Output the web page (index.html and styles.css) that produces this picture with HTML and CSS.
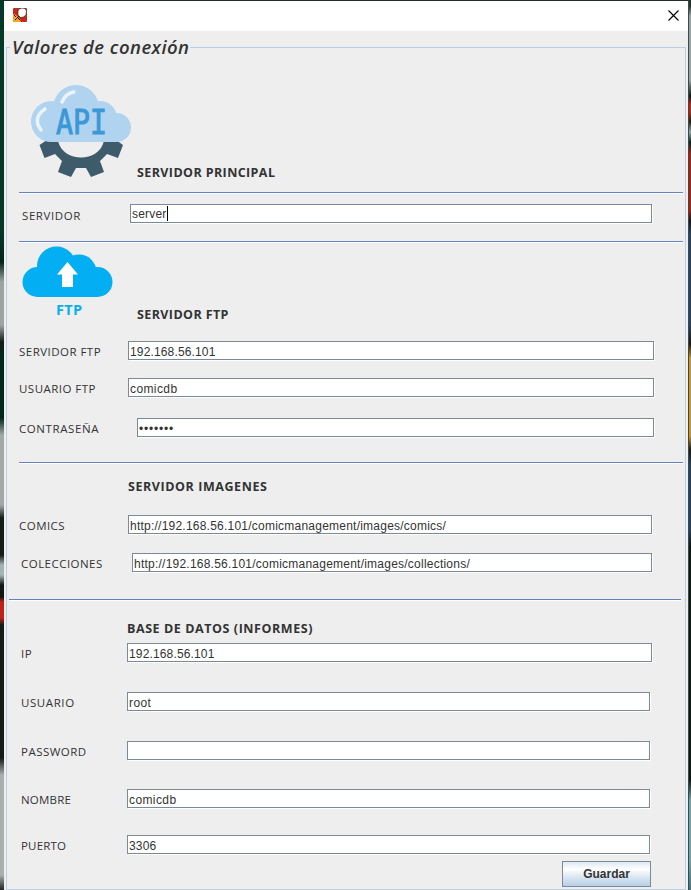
FILE: index.html
```
<!DOCTYPE html>
<html lang="es">
<head>
<meta charset="utf-8">
<title>Valores de conexión</title>
<link rel="stylesheet" href="styles.css">
</head>
<body>
<div class="desktop">
<main class="window">
  <header class="titlebar">
    <svg class="app-icon" width="14" height="14" viewBox="0 0 14 14"><rect width="14" height="14" rx="1" fill="#c52b1c"/><path d="M0 6l3 1 3 3 2 4H0z" fill="#f4a51c"/><path d="M1 7l2 2M2 12l4-4M5 10l2 2" stroke="#251b16" stroke-width="1"/><path d="M6 1l3-1 3 .5 1.500 2.500-.5 4-2.500 2-3 .5L5 7V3z" fill="#fff" stroke="#251b16" stroke-width=".6"/></svg>
    <svg class="close" width="11" height="11" viewBox="0 0 11 11"><path d="M.5.5l10 10M10.500.5l-10 10" stroke="#000" stroke-width="1.1"/></svg>
  </header>
  <section class="group">
    <h1 class="legend"><span>Valores de conexión</span></h1>
    <div class="banner banner-api">
      <svg width="102" height="94" viewBox="0 0 102 94">
        <path d="M17 55L9.500 60 14.500 73 25 69 32 76 28 87 41 92 46 83H56L61 92 74 87 70 76 77 69 88 73 93 60 86 55z" fill="#3e5b6b"/>
        <path d="M28 56C33 78 69 78 74 56z" fill="#eee"/>
        <g fill="#b0d3ef"><circle cx="21.500" cy="36.500" r="20.500"/><circle cx="46" cy="23" r="23"/><circle cx="70" cy="33" r="17"/><circle cx="86.500" cy="42.500" r="14.500"/><rect x="21" y="35" width="66" height="22"/></g>
        <path d="M32 17Q36 8 44 7M15 24Q2 33 11 45" fill="none" stroke="#e9f4fc" stroke-width="3.500" stroke-linecap="round"/>
        <text x="26" y="48.500" textLength="51" lengthAdjust="spacingAndGlyphs" class="api-word">API</text>
      </svg>
      <h2 class="w-main">SERVIDOR PRINCIPAL</h2>
    </div>
    <hr class="first">
    <div class="row server"><label class="wide">SERVIDOR</label><div class="field focus">server</div></div>
    <hr class="second">
    <div class="banner banner-ftp">
      <svg width="92" height="72" viewBox="0 0 92 72">
        <g fill="#03aef2"><circle cx="15.500" cy="36" r="15"/><circle cx="34.500" cy="20" r="19.500"/><circle cx="57" cy="26" r="17.500"/><circle cx="75.500" cy="36" r="15"/><rect x="15" y="25" width="60.500" height="26"/></g>
        <path d="M45.500 16L56 28.500H51V41H40V28.500H35z" fill="#fff"/>
        <text x="34" y="68.500" textLength="26" class="ftp-word">FTP</text>
      </svg>
      <h2 class="w-ftp">SERVIDOR FTP</h2>
    </div>
    <div class="row f1"><label>SERVIDOR FTP</label><div class="field num">192.168.56.101</div></div>
    <div class="row f2"><label>USUARIO FTP</label><div class="field">comicdb</div></div>
    <div class="row f3"><label class="wide">CONTRASEÑA</label><div class="field dots">•••••••</div></div>
    <hr class="third">
    <h2 class="images-title">SERVIDOR IMAGENES</h2>
    <div class="row i1"><label>COMICS</label><div class="field url">http://192.168.56.101/comicmanagement/images/comics/</div></div>
    <div class="row i2"><label>COLECCIONES</label><div class="field url">http://192.168.56.101/comicmanagement/images/collections/</div></div>
    <hr class="fourth">
    <h2 class="db-title">BASE DE DATOS (INFORMES)</h2>
    <div class="row d1"><label>IP</label><div class="field num">192.168.56.101</div></div>
    <div class="row d2"><label class="wide">USUARIO</label><div class="field">root</div></div>
    <div class="row d3"><label>PASSWORD</label><div class="field"></div></div>
    <div class="row d4"><label class="narrow">NOMBRE</label><div class="field">comicdb</div></div>
    <div class="row d5"><label class="narrow">PUERTO</label><div class="field num">3306</div></div>
    <button type="button">Guardar</button>
  </section>
</main>
</div>
</body>
</html>
```
FILE: styles.css
```
* { box-sizing: border-box; }
body { margin: 0; color: #333; font-family: "Comic Sans MS", "Open Sans", sans-serif; }
.desktop {
  height: 890px; padding: 1px 2px 0 4px; overflow: hidden;
  background:
    linear-gradient(#06382a 0 230px, #02251c 262px, #9ca5a3 282px 325px, #151b17 342px, #03291f 355px 418px, #a0a9a7 435px 505px, #151b17 518px 555px, #a4b4b4 565px 575px, #101715 585px 597px, #bd221b 602px 618px, #151b17 625px 758px, #a8b0af 775px 875px, #222 890px) left / 4px 100% no-repeat,
    linear-gradient(#25332f 0 6px, #99a3a3 16px 80px, #111b16 96px, #b8261b 104px 112px, #202218 122px, #99a8a8 132px, #082820 142px, #aa2015 154px 210px, #17161a 221px, #29435f 234px 325px, #1b1812 344px, #c49530 358px 436px, #181c16 450px, #29405c 465px 530px, #0c1714 547px 780px, #75a1a8 800px 860px, #3f747b 890px) right / 4px 100% no-repeat,
    #252b28;
}
.window { height: 889px; background: #eee; border-right: 1px solid #414746; }
.titlebar { height: 30px; background: #fff; display: flex; justify-content: space-between; align-items: flex-start; padding: 7px 9px 0; }
.close { margin: 2px 0 0; }
.group { display: flex; flex-direction: column; height: 843px; margin: 16px 2px 0; border: 1px solid #b8cfe5; }
.legend { height: 24px; margin: -13px 0 0 3px; font: italic 600 18.500px/24px "Comic Sans MS", "Open Sans", sans-serif; letter-spacing: .45px; }
.legend span { display: inline-block; padding: 0 1px 0 2px; background: #eee; }
h2 { margin: 0; font-size: 12.500px; line-height: 16px; font-weight: 700; letter-spacing: .57px; white-space: nowrap; }
.w-main, .w-ftp { letter-spacing: .4px; }
.banner { display: flex; align-items: flex-end; }
.banner-api { height: 94px; margin: 26px 0 0 23px; }
.banner-api h2 { margin: 0 0 -2px 5px; }
.api-word { font: 34px "DejaVu Sans Mono", monospace; fill: #3b98d7; stroke: #3b98d7; stroke-width: 1px; }
.ftp-word { font: 700 14.500px "Open Sans", sans-serif; fill: #0aaeef; }
hr { flex: none; width: 664px; height: 2px; margin: 14px 0 0 12px; border: 0; border-top: 1px solid #6382bf; background: #fff; }
hr.first { margin-top: 13px; }
.row { display: grid; height: 20px; flex: none; line-height: 20px; }
label { font-size: 11.500px; line-height: 22px; white-space: nowrap; letter-spacing: .47px; }
label.wide { letter-spacing: .58px; }
label.narrow { letter-spacing: .2px; }
.field { height: 19px; padding: 2px 0 0 1px; border: 1px solid #7a8a99; background: #fff; box-shadow: 1px 1px #fff; font: 12px/17px "Liberation Sans", Arial, sans-serif; letter-spacing: .4px; white-space: nowrap; }
.num { letter-spacing: .15px; }
.url { letter-spacing: .23px; }
.dots { letter-spacing: .8px; }
.server { grid-template-columns: 108px 522px; margin: 10px 0 0 15px; }
.server label { line-height: 24px; }
.focus { letter-spacing: .2px; padding-top: 1px; }
.focus::after { content: ""; display: inline-block; width: 1px; height: 15px; background: #000; vertical-align: -3px; }
hr.second { margin-top: 17px; }
.banner-ftp { height: 72px; margin: 3px 0 0 15px; }
.banner-ftp h2 { margin: 0 0 -5px 23px; }
.f1, .f2 { grid-template-columns: 109px 526px; margin-left: 12px; }
.f1 { margin-top: 23px; }
.f2 { margin-top: 17px; }
.f3 { grid-template-columns: 118px 517px; margin: 20px 0 0 12px; }
hr.third { margin-top: 24px; }
.images-title { margin: 15px 0 0 121px; }
.i1 { grid-template-columns: 109px 524px; margin: 20px 0 0 12px; }
.i2 { grid-template-columns: 111px 520px; margin: 18px 0 0 14px; }
hr.fourth { width: 672px; margin: 26px 0 0 2px; }
.db-title { margin: 20px 0 0 120px; }
.d1, .d2, .d3, .d4, .d5 { grid-template-columns: 106px 523px; margin-left: 14px; }
.d1 { grid-template-columns: 106px 525px; margin-top: 6px; }
.d2, .d3 { margin-top: 29px; }
.d4 { margin-top: 28px; }
.d5 { margin-top: 26px; }
button { align-self: flex-start; width: 89px; height: 26px; margin: 6px 0 0 555px; padding: 0; border: 1px solid #7a8a99; color: #333; font: 700 12px "Liberation Sans", Arial, sans-serif; background: linear-gradient(#dde8f3, #fff 30%, #dde8f3 60%, #b8cfe5); }
```
